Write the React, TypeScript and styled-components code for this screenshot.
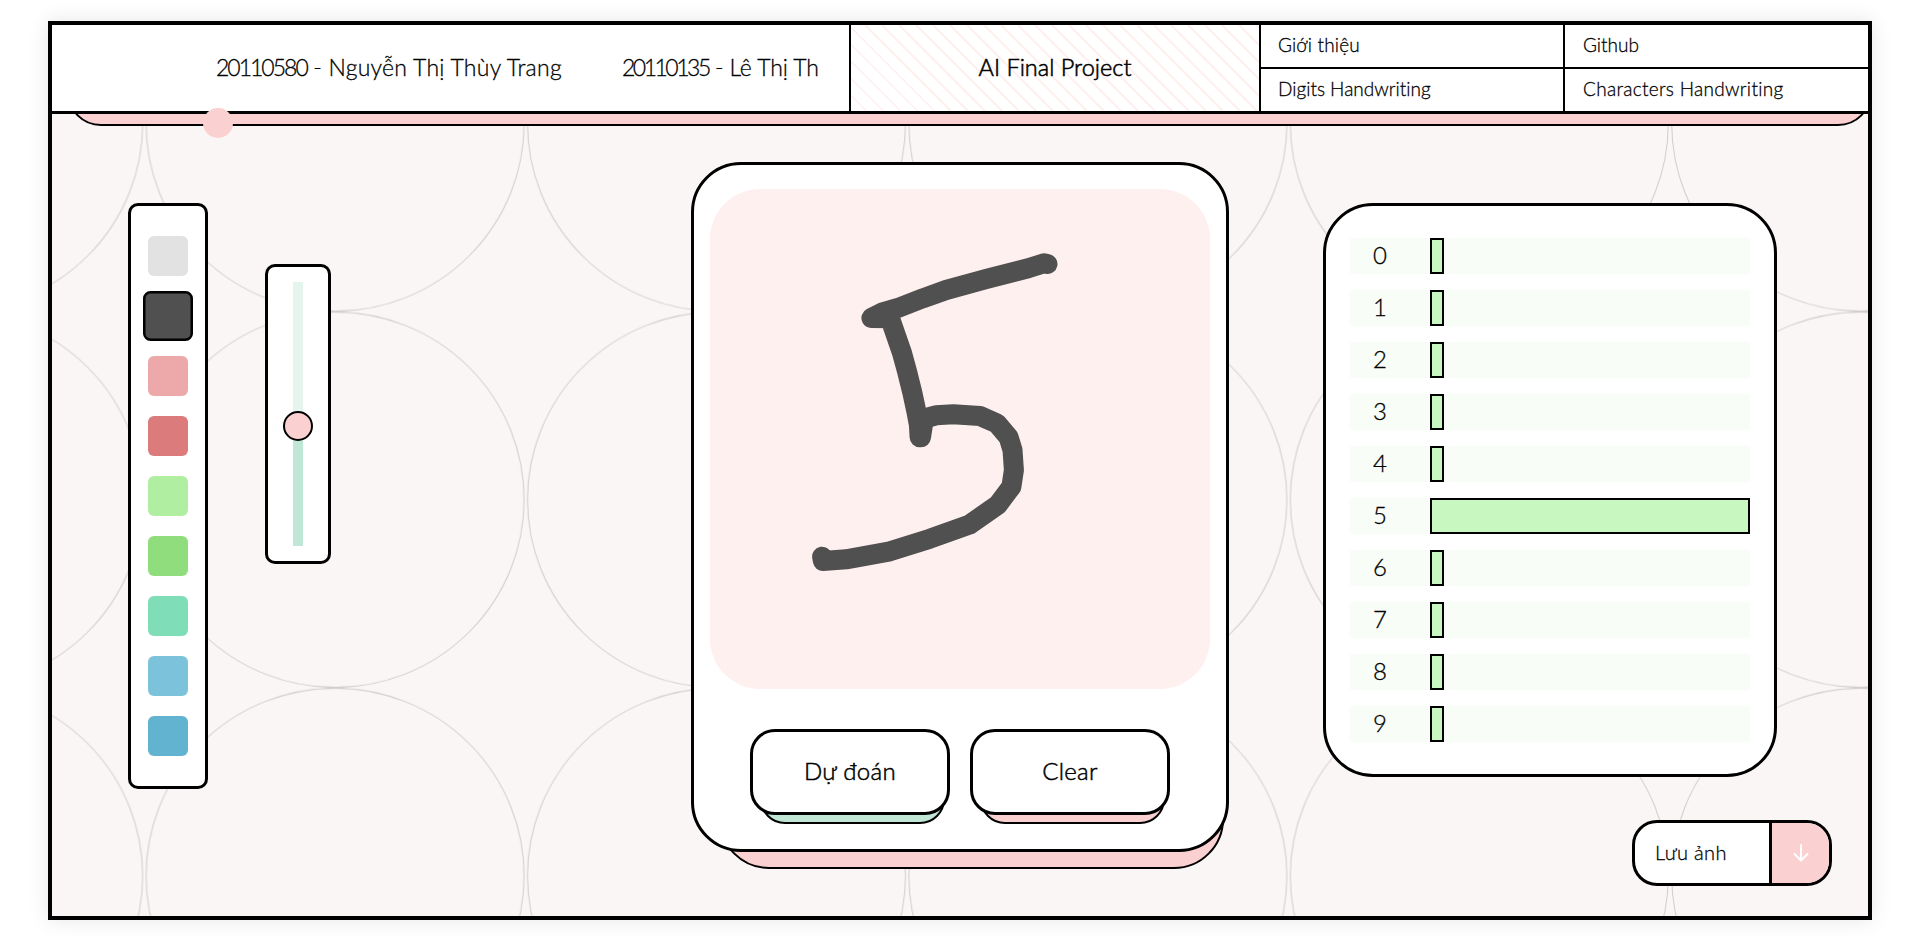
import React from 'react';
import styled, { createGlobalStyle } from 'styled-components';

const GlobalStyle = createGlobalStyle`
  *, *::before, *::after { box-sizing: border-box; }
  body {
    margin: 0;
    overflow: hidden;
    background: #fff;
    color: #000;
    font-family: Lato, 'Open Sans', sans-serif;
    font-weight: 300;
    font-variant-ligatures: none;
    -webkit-text-stroke: 0.28px #000;
  }
  button { font: inherit; color: inherit; cursor: pointer; }
`;

const pink = '#fbd0d0';
const mint = '#c0e6d6';

const Page = styled.div`
  height: 937px;
  padding: 21px 39px 17px 48px;
`;

const Frame = styled.div`
  position: relative;
  isolation: isolate;
  display: flex;
  flex-direction: column;
  height: 899px;
  border: 4px solid #000;
  background: #faf6f5;
  box-shadow: 0 0 20px rgba(0, 0, 0, 0.1);
`;

const Backdrop = styled.svg`
  position: absolute;
  inset: 0;
  z-index: -2;
  width: 100%;
  height: 100%;
`;

const HeaderWrap = styled.div`
  position: relative;
  &::after {
    content: '';
    position: absolute;
    z-index: -1;
    left: 15px;
    right: -4px;
    bottom: -12px;
    height: 80px;
    border: 2px solid #000;
    border-radius: 34px;
    background: ${pink};
    clip-path: inset(0 4px 0 0);
  }
`;

const Header = styled.header`
  display: grid;
  grid-template-columns: 799px 410px 1fr;
  height: 89px;
  border-bottom: 3px solid #000;
  background: #fff;
`;

const HeaderDot = styled.span`
  position: absolute;
  left: 151px;
  top: 83px;
  width: 30px;
  height: 30px;
  border-radius: 50%;
  background: ${pink};
`;

const Authors = styled.div`
  display: flex;
  align-items: center;
  padding: 0 0 2px 164px;
  border-right: 2px solid #000;
  font-size: 23px;
  white-space: nowrap;
`;

const Author = styled.span<{ $width: number; $spacing: number }>`
  width: ${(p) => p.$width}px;
  letter-spacing: ${(p) => p.$spacing}px;
`;

const StudentId = styled.span<{ $spacing: number }>`
  letter-spacing: ${(p) => p.$spacing}px;
`;

const Title = styled.h1`
  display: flex;
  align-items: center;
  justify-content: center;
  margin: 0;
  padding-bottom: 3px;
  border-right: 2px solid #000;
  background: repeating-linear-gradient(45deg, #fff 0 10px, #fff0f0 10px 12px);
  font-size: 23.5px;
  font-weight: 300;
  -webkit-text-stroke: 0.55px #000;
`;

const Nav = styled.nav`
  display: grid;
  grid-template-columns: 304px 1fr;
  grid-template-rows: 44px 42px;
`;

const NavLink = styled.a<{ $right?: boolean; $bottom?: boolean; $spacing: number }>`
  display: flex;
  align-items: center;
  padding: 0 0 3px ${(p) => (p.$right ? 17 : 18)}px;
  border-right: ${(p) => (p.$right ? '2px solid #000' : '0')};
  border-bottom: ${(p) => (p.$bottom ? '2px solid #000' : '0')};
  font-size: 19px;
  letter-spacing: ${(p) => p.$spacing}px;
`;

const Stage = styled.main`
  position: relative;
  display: flex;
  align-items: flex-start;
  flex: 1;
`;

const Palette = styled.div`
  display: flex;
  flex-direction: column;
  align-items: center;
  gap: 20px;
  width: 80px;
  margin: 89px 0 0 76px;
  padding: 30px 0;
  border: 3px solid #000;
  border-radius: 10px;
  background: #fff;
`;

const Swatch = styled.button<{ $color: string; $selected: boolean }>`
  width: 40px;
  height: 40px;
  padding: 0;
  border: ${(p) => (p.$selected ? '2px solid #000' : '0')};
  border-radius: 6px;
  background: ${(p) => p.$color};
  transform: ${(p) => (p.$selected ? 'scale(1.25)' : 'none')};
`;

const BrushSize = styled.div`
  display: flex;
  justify-content: center;
  width: 66px;
  height: 300px;
  margin: 150px 0 0 57px;
  padding: 15px 0;
  border: 3px solid #000;
  border-radius: 10px;
  background: #fff;
`;

const Track = styled.div`
  position: relative;
  display: flex;
  flex-direction: column;
  justify-content: flex-end;
  width: 10px;
  background: #e5f4ed;
`;

const TrackFill = styled.div`
  height: 120px;
  background: ${mint};
`;

const Thumb = styled.span`
  position: absolute;
  left: -10px;
  bottom: 105px;
  width: 30px;
  height: 30px;
  border: 2px solid #000;
  border-radius: 50%;
  background: ${pink};
`;

const BoardWrap = styled.div`
  position: relative;
  isolation: isolate;
  margin: 48px 0 0 360px;
  &::before {
    content: '';
    position: absolute;
    z-index: -1;
    left: 28px;
    right: 5px;
    bottom: -17px;
    height: 140px;
    border: 2px solid #000;
    border-radius: 50px;
    background: ${pink};
  }
`;

const Board = styled.section`
  display: flex;
  flex-direction: column;
  align-items: center;
  width: 538px;
  height: 690px;
  padding-top: 24px;
  border: 3px solid #000;
  border-radius: 50px;
  background: #fff;
`;

const Canvas = styled.svg`
  width: 500px;
  height: 500px;
  border-radius: 50px;
  background: #fff0f0;
`;

const Actions = styled.div`
  display: flex;
  gap: 20px;
  margin-top: 40px;
`;

const ActionWrap = styled.div<{ $plate: string }>`
  position: relative;
  isolation: isolate;
  &::before {
    content: '';
    position: absolute;
    z-index: -1;
    left: 10px;
    right: 5px;
    bottom: -9px;
    height: 60px;
    border: 2px solid #000;
    border-radius: 25px;
    background: ${(p) => p.$plate};
  }
`;

const ActionButton = styled.button`
  display: block;
  width: 200px;
  height: 86px;
  padding: 0 0 3px;
  border: 3px solid #000;
  border-radius: 25px;
  background: #fff;
  font-size: 24px;
  letter-spacing: 0.3px;
  -webkit-text-stroke: 0.5px #000;
`;

const Results = styled.section`
  display: flex;
  flex-direction: column;
  gap: 16px;
  width: 454px;
  margin: 89px 0 0 94px;
  padding: 32px 24px;
  border: 3px solid #000;
  border-radius: 50px;
  background: #fff;
`;

const ResultRow = styled.div`
  display: flex;
  height: 36px;
  background: #f8fdf8;
`;

const ResultLabel = styled.span`
  width: 60px;
  margin-right: 20px;
  text-align: center;
  font-size: 24px;
  line-height: 34px;
`;

const ResultBar = styled.div`
  border: 2px solid #000;
  background: #c8f7c0;
`;

const SaveButton = styled.button`
  position: absolute;
  right: 36px;
  bottom: 30px;
  display: flex;
  width: 200px;
  height: 66px;
  padding: 0;
  overflow: hidden;
  border: 3px solid #000;
  border-radius: 25px;
  background: #fff;
  font-size: 20px;
  letter-spacing: 0.3px;
`;

const SaveLabel = styled.span`
  display: flex;
  align-items: center;
  width: 134px;
  height: 60px;
  padding: 0 0 2px 20px;
`;

const SaveIcon = styled.span`
  display: flex;
  align-items: center;
  justify-content: center;
  width: 60px;
  height: 60px;
  border-left: 3px solid #000;
  background: ${pink};
`;

const colors = [
  '#e2e2e2', '#505050', '#eda9a9', '#db7b7b', '#b0eea2',
  '#8fdd7d', '#7fddb8', '#7cc2db', '#62b3d0',
];

const probabilities = [0, 0, 0, 0, 0, 1, 0, 0, 0, 0];

const stroke =
  '337.5,75 334,74.3 318.2,79.3 277.1,89.7 236.1,101 212.9,109.3 187.9,119 172.5,123.3 161.4,129 180,129.3 186.4,147.7 192.1,164.3 197.1,182.7 202.1,202.7 206.4,222.7 208.9,236 209.6,248.3 211,248.3 213.2,234.3 217.1,228.7 226.4,226.3 243.2,225.3 270,227 286.8,234.3 298.6,248.3 302.5,261 303.9,281 301.4,297.7 287.9,315.7 259.3,335.7 220,349.7 180,362.3 136.1,370.3 112.9,372 112.1,367.7';

export default function App() {
  return (
    <Page>
      <GlobalStyle />
      <Frame>
        <Backdrop>
          <defs>
            <pattern id="rings" x="92.4" y="286.6" width="381.4" height="376.2" patternUnits="userSpaceOnUse">
              <ellipse cx="190.7" cy="188.1" rx="189" ry="187.7" fill="none" stroke="#000" strokeOpacity="0.17" />
            </pattern>
          </defs>
          <rect width="100%" height="100%" fill="url(#rings)" />
        </Backdrop>

        <HeaderWrap>
          <Header>
            <Authors>
              <Author $width={406} $spacing={0.25}>
                <StudentId $spacing={-2}>20110580</StudentId> - Nguyễn Thị Thùy Trang
              </Author>
              <Author $width={200} $spacing={-0.1}>
                <StudentId $spacing={-2.5}>20110135</StudentId> - Lê Thị Th
              </Author>
            </Authors>
            <Title>AI Final Project</Title>
            <Nav>
              <NavLink $right $bottom $spacing={0.15}>Giới thiệu</NavLink>
              <NavLink $bottom $spacing={0}>Github</NavLink>
              <NavLink $right $spacing={0}>Digits Handwriting</NavLink>
              <NavLink $spacing={0.3}>Characters Handwriting</NavLink>
            </Nav>
          </Header>
          <HeaderDot />
        </HeaderWrap>

        <Stage>
          <Palette>
            {colors.map((color, i) => (
              <Swatch key={color} $color={color} $selected={i === 1} />
            ))}
          </Palette>

          <BrushSize>
            <Track>
              <TrackFill />
              <Thumb />
            </Track>
          </BrushSize>

          <BoardWrap>
            <Board>
              <Canvas viewBox="0 0 500 500">
                <polyline
                  points={stroke}
                  fill="none"
                  stroke="#505050"
                  strokeWidth="20"
                  strokeLinecap="round"
                  strokeLinejoin="round"
                />
              </Canvas>
              <Actions>
                <ActionWrap $plate={mint}>
                  <ActionButton>Dự đoán</ActionButton>
                </ActionWrap>
                <ActionWrap $plate={pink}>
                  <ActionButton>Clear</ActionButton>
                </ActionWrap>
              </Actions>
            </Board>
          </BoardWrap>

          <Results>
            {probabilities.map((p, digit) => (
              <ResultRow key={digit}>
                <ResultLabel>{digit}</ResultLabel>
                <ResultBar style={{ width: 14 + p * 306 }} />
              </ResultRow>
            ))}
          </Results>

          <SaveButton>
            <SaveLabel>Lưu ảnh</SaveLabel>
            <SaveIcon>
              <svg width="18" height="20" viewBox="0 0 18 20" fill="none" stroke="#fff" strokeWidth="2" strokeLinecap="round" strokeLinejoin="round">
                <path d="M9 2v15.5M2.5 11l6.5 6.5 6.5-6.5" />
              </svg>
            </SaveIcon>
          </SaveButton>
        </Stage>
      </Frame>
    </Page>
  );
}
